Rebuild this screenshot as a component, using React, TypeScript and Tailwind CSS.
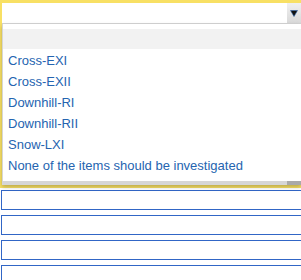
const ITEMS = [
  "",
  "Cross-EXI",
  "Cross-EXII",
  "Downhill-RI",
  "Downhill-RII",
  "Snow-LXI",
  "None of the items should be investigated",
];

export default function App() {
  return (
    <div className="relative w-[301px] h-[280px] overflow-hidden bg-white font-['Liberation_Sans',Arial,sans-serif]">
      {/* field wrapper with yellow highlight */}
      <div className="h-[188px] border-t-[3px] border-b-[3px] border-l-2 border-[#f8e064]">
        <div className="flex h-[21px] border-b border-[#d4d4d4] bg-white">
          <div className="flex-1" />
          <div className="flex w-[14px] items-center justify-center bg-gradient-to-b from-[#f0f0f0] to-[#d9d9d9]">
            <svg width="8" height="7" viewBox="0 0 8 7">
              <path d="M0.5 0.5 L7.5 0.5 L4 6.5 Z" fill="#111" stroke="#2a5fa8" strokeWidth="0.6" />
            </svg>
          </div>
        </div>
      </div>

      <div className="flex flex-col gap-[5px] pt-[2px] pl-px">
        {[0, 1, 2, 3].map((i) => (
          <div key={i} className="w-[320px] shrink-0 h-[20px] border border-[#3166c6] bg-white" />
        ))}
      </div>

      {/* open dropdown list */}
      <div className="absolute left-[2px] right-0 top-[24px] h-[161px] flex flex-col border-l border-[#d6d6d6] bg-white shadow-[0_2px_4px_rgba(0,0,0,0.25)]">
        <div className="flex-1 pt-[5px]">
          {ITEMS.map((item, i) => (
            <div
              key={i}
              className={
                i === 0
                  ? "h-[20px] mb-px bg-[#f2f2f2]"
                  : "h-[21px] px-[5px] text-[13px] leading-[21px] text-[#2564b0] whitespace-nowrap"
              }
            >
              {item}
            </div>
          ))}
        </div>
        <div className="flex h-[4px] bg-[#d6d6d6]">
          <div className="flex-1" />
          <div className="w-[14px] bg-[#a9a9a9]" />
        </div>
      </div>
    </div>
  );
}
